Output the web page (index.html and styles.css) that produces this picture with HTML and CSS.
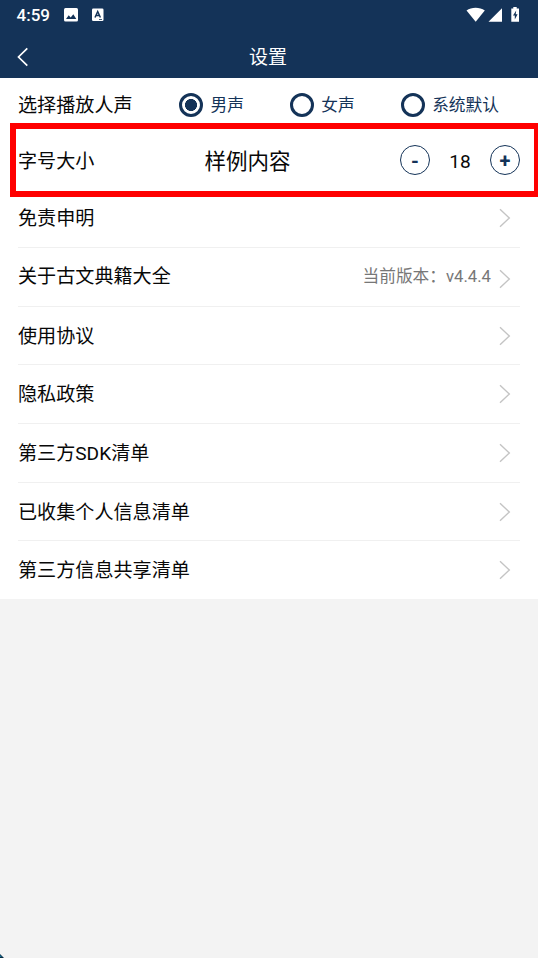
FILE: index.html
```html
<!DOCTYPE html>
<html lang="zh-CN">
<head>
<meta charset="utf-8">
<title>设置</title>
<link rel="stylesheet" href="styles.css">
</head>
<body>
<header class="header">
  <div class="status">
    <span class="time">4:59</span>
    <svg class="picture" width="14" height="14" viewBox="0 0 14 14"><rect width="14" height="13.5" rx="1.5" fill="#fff"/><path d="M2 11l2.7-3.7 2 2.3 2.6-3.4L12.300 11z" fill="#143358"/></svg>
    <svg class="letter" width="12" height="14" viewBox="0 0 12 14"><rect y=".5" width="11.500" height="12.500" rx="1.300" fill="#fff"/><path d="M3 9.500L5.700 3.500 8.400 9.500M4 7.600h3.400" fill="none" stroke="#143358" stroke-width="1.500"/><path d="M7 11.500h3" stroke="#143358" stroke-width=".8"/></svg>
    <svg class="signals" width="56" height="18" viewBox="0 0 56 18"><path d="M.5 4.500C5.500.8 13.700.8 18.800 4.500L9.700 15.700z" fill="#fff"/><path d="M36 2.200V15.700H22.500z" fill="#fff"/><path d="M45.300 2.500h2V1h3.400v1.500h2.300V15.700h-7.700z" fill="#fff"/><path d="M50.200 4.500L47 9.500h1.800v4l2.800-5.200h-1.900z" fill="#143358"/></svg>
  </div>
  <div class="titlebar">
    <svg class="back" width="12" height="20" viewBox="0 0 12 20"><path d="M10.300 1.300L1.500 10l8.800 8.700" fill="none" stroke="#fff" stroke-width="1.700"/></svg>
    <h1 class="title">设置</h1>
  </div>
</header>
<main class="settings">
  <div class="row voice">
    <span class="label">选择播放人声</span>
    <div class="options">
      <span class="option"><i class="radio checked"></i>男声</span>
      <span class="option"><i class="radio"></i>女声</span>
      <span class="option"><i class="radio"></i>系统默认</span>
    </div>
  </div>
  <div class="row size">
    <span class="label">字号大小</span>
    <span class="sample">样例内容</span>
    <div class="stepper">
      <span class="step">-</span><span class="value">18</span><span class="step">+</span>
    </div>
    <div class="highlight"></div>
  </div>
  <div class="row link"><span class="label">免责申明</span><svg class="arrow" width="12" height="20" viewBox="0 0 12 20"><path d="M1 1.300L10.300 10 1 18.700"/></svg></div>
  <div class="row link about"><span class="label">关于古文典籍大全</span><span class="version">当前版本：v4.4.4</span><svg class="arrow" width="12" height="20" viewBox="0 0 12 20"><path d="M1 1.300L10.300 10 1 18.700"/></svg></div>
  <div class="row link"><span class="label">使用协议</span><svg class="arrow" width="12" height="20" viewBox="0 0 12 20"><path d="M1 1.300L10.300 10 1 18.700"/></svg></div>
  <div class="row link"><span class="label">隐私政策</span><svg class="arrow" width="12" height="20" viewBox="0 0 12 20"><path d="M1 1.300L10.300 10 1 18.700"/></svg></div>
  <div class="row link"><span class="label">第三方SDK清单</span><svg class="arrow" width="12" height="20" viewBox="0 0 12 20"><path d="M1 1.300L10.300 10 1 18.700"/></svg></div>
  <div class="row link"><span class="label">已收集个人信息清单</span><svg class="arrow" width="12" height="20" viewBox="0 0 12 20"><path d="M1 1.300L10.300 10 1 18.700"/></svg></div>
  <div class="row link"><span class="label">第三方信息共享清单</span><svg class="arrow" width="12" height="20" viewBox="0 0 12 20"><path d="M1 1.300L10.300 10 1 18.700"/></svg></div>
</main>
<svg class="corner" width="4" height="4" viewBox="0 0 4 4"><path d="M0 0l4 4H0z" fill="#082b42"/><path d="M0 1l2 2H0z" fill="#177499"/></svg>
</body>
</html>
```
FILE: styles.css
```css
* {
  box-sizing: border-box;
}

body {
  margin: 0;
  height: 958px;
  overflow: hidden;
  background: #f3f3f3;
  color: #080808;
  font-family: Roboto, "Noto Sans CJK SC", sans-serif;
  font-size: 19.100px;
  line-height: 28px;
}

.header {
  height: 78px;
  background: #143358;
  color: #fff;
}

.status {
  display: flex;
  align-items: center;
  height: 30px;
  padding: 0 17px 0 16.500px;
}

.time {
  width: 47.500px;
  font-size: 17px;
  font-weight: 500;
}

.letter {
  margin-left: 14px;
}

.signals {
  margin: 0 0 0 auto;
  transform: translateX(1px);
}

.titlebar {
  display: grid;
  grid-template-columns: 40px 1fr 40px;
  align-items: center;
  height: 48px;
  padding: 0 2px 0 0;
}

.back {
  margin: 6px 0 0 17px;
}

.title {
  margin: 8px 0 0;
  font-size: 19px;
  font-weight: 400;
  text-align: center;
}

.settings {
  height: 521px;
  background: #fff;
}

.row {
  display: flex;
  align-items: center;
  margin: 0 18px;
  height: 58.670px;
  white-space: nowrap;
}

.label {
  padding-top: 2px;
}

.voice {
  height: 54px;
}

.options {
  display: flex;
  flex: 1;
  margin-left: 46.500px;
  color: #143358;
  font-size: 16.700px;
}

.option {
  display: flex;
  align-items: center;
  width: 110.800px;
  padding-top: 1px;
}

.radio {
  width: 24px;
  height: 24px;
  margin: -1px 7.500px 0 0;
  border: 3px solid #143358;
  border-radius: 50%;
}

.checked {
  background: radial-gradient(circle, #143358 0 5.700px, transparent 6.300px);
}

.size {
  position: relative;
  height: 56.500px;
}

.size .label,
.sample,
.value {
  padding-top: 3px;
}

.sample {
  margin-left: 110px;
  font-size: 21.500px;
}

.stepper {
  display: flex;
  align-items: center;
  justify-content: space-between;
  width: 120px;
  margin-left: auto;
}

.step {
  width: 30px;
  height: 30px;
  border: 1.300px solid #143358;
  border-radius: 50%;
  color: #143358;
  font-size: 20px;
  font-weight: 700;
  line-height: 30px;
  text-align: center;
}

.highlight {
  position: absolute;
  top: -9px;
  left: -8px;
  width: 530px;
  height: 74px;
  border: 6px solid #f00;
}

.link + .link {
  border-top: 1px solid #f0f0f0;
}

.arrow {
  margin: 0 9px 0 auto;
  fill: none;
  stroke: #c4c4c4;
  stroke-width: 1.400;
}

.about .label {
  padding-top: 0;
}

.version {
  margin-left: auto;
  padding-top: 1px;
  color: #777;
  font-size: 16.700px;
}

.about .arrow {
  margin: 4px 9px 0 8px;
}

.corner {
  position: absolute;
  left: 0;
  bottom: 0;
}
```
